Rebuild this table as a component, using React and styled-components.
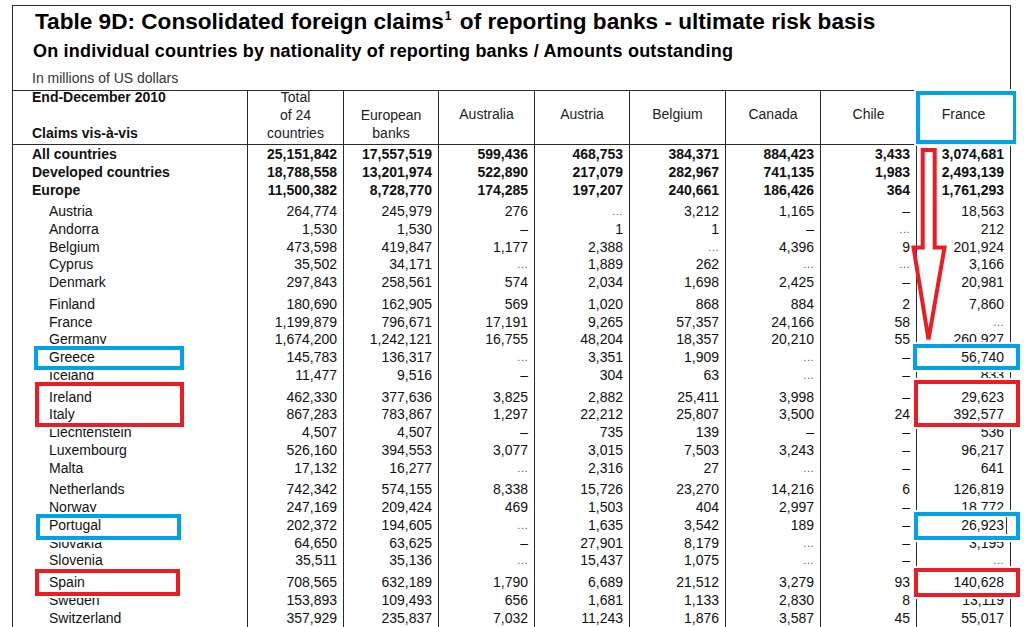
import React from "react";
import styled, { createGlobalStyle } from "styled-components";

const LINE = "#2b2b2b";
const RED = "#ed1c24";
const BLUE = "#00a2e8";
const COLS = "234px 96px 95px 96px 95px 96px 95px 96px 94px";

const GlobalStyle = createGlobalStyle`
  * { box-sizing: border-box; }
  html, body { margin: 0; background: #fff; overflow: hidden; }
  body { font-family: "Liberation Sans", Arial, sans-serif; color: #111; }
`;

const Page = styled.div`
  position: relative;
  width: 1024px;
  height: 627px;
  overflow: hidden;
  padding: 5px 0 0 12px;
`;

const Sheet = styled.div`
  width: 999px;
  height: 660px;
  border: 1px solid ${LINE};
  border-bottom: none;
`;

const TitleBlock = styled.div`
  height: 85px;
  padding: 3px 0 0 19px;
  border-bottom: 1px solid ${LINE};
`;

const Title = styled.h1`
  margin: 0 0 0 3px;
  font-size: 22.6px;
  line-height: 26px;
  font-weight: bold;
  color: #000;
  white-space: nowrap;
`;

const Sup = styled.sup`
  font-size: 12px;
  line-height: 0;
  vertical-align: 9px;
  margin: 0 2px 0 1px;
`;

const Subtitle = styled.h2`
  margin: 5px 0 0 1px;
  font-size: 18px;
  letter-spacing: 0.2px;
  line-height: 22px;
  font-weight: bold;
  color: #000;
  white-space: nowrap;
`;

const Units = styled.div`
  margin-top: 8px;
  font-size: 14px;
  line-height: 16px;
  color: #333;
`;

const HeaderRow = styled.div`
  display: grid;
  grid-template-columns: ${COLS};
  grid-template-rows: 53px;
  height: 54px;
  border-bottom: 1px solid ${LINE};
`;

const HeadCell = styled.div`
  display: flex;
  flex-direction: column;
  justify-content: flex-end;
  align-items: center;
  min-height: 0;
  padding-bottom: ${(p) => (p.$mid ? 21 : 2)}px;
  border-left: 1px solid ${LINE};
  font-size: 14px;
  line-height: 18px;
  color: #222;
  white-space: nowrap;
`;

const StubHead = styled.div`
  display: flex;
  flex-direction: column;
  justify-content: space-between;
  min-height: 0;
  padding: 0 0 2px 19px;
  margin-top: -3px;
  font-size: 14px;
  line-height: 18px;
  font-weight: bold;
  color: #111;
`;

const Row = styled.div`
  display: grid;
  grid-template-columns: ${COLS};
  height: ${(p) => p.$h + p.$gap}px;
  font-weight: ${(p) => (p.$bold ? "bold" : "normal")};
`;

const NameCell = styled.div`
  display: flex;
  align-items: flex-end;
  padding-left: ${(p) => (p.$indent ? 36 : 19)}px;
  font-size: 14px;
  line-height: ${(p) => p.$h}px;
  white-space: nowrap;
`;

const NumCell = styled.div`
  display: flex;
  align-items: flex-end;
  justify-content: flex-end;
  padding-right: 6px;
  border-left: 1px solid ${LINE};
  font-size: 14px;
  line-height: ${(p) => p.$h}px;
  white-space: nowrap;
`;

const Dots = styled.span`
  font-size: 11px;
  font-weight: normal;
  color: #555;
  letter-spacing: 0.5px;
`;

const Mark = styled.div`
  position: absolute;
  left: ${(p) => p.$x}px;
  top: ${(p) => p.$y}px;
  width: ${(p) => p.$w}px;
  height: ${(p) => p.$h}px;
  border: 4px solid ${(p) => (p.$red ? RED : BLUE)};
  box-shadow: 0 0 0 2px #fff;
  pointer-events: none;
`;

const EdgeMask = styled.span`
  position: absolute;
  top: 0;
  bottom: 0;
  left: ${(p) => p.$left}px;
  width: 5px;
  background: #fff;
`;

const Caret = styled.span`
  position: absolute;
  left: ${(p) => p.$left}px;
  top: 1px;
  width: 1px;
  height: 17px;
  background: #333;
`;

const Arrow = styled.svg`
  position: absolute;
  left: 905px;
  top: 145px;
  overflow: visible;
`;

const headers = [
  { lines: ["Total", "of 24", "countries"] },
  { lines: ["European", "banks"] },
  { lines: ["Australia"], mid: true },
  { lines: ["Austria"], mid: true },
  { lines: ["Belgium"], mid: true },
  { lines: ["Canada"], mid: true },
  { lines: ["Chile"], mid: true },
  { lines: ["France"], mid: true },
];

const groups = [
  {
    bold: true,
    h: 18,
    rows: [
      ["All countries", "25,151,842", "17,557,519", "599,436", "468,753", "384,371", "884,423", "3,433", "3,074,681"],
      ["Developed countries", "18,788,558", "13,201,974", "522,890", "217,079", "282,967", "741,135", "1,983", "2,493,139"],
      ["Europe", "11,500,382", "8,728,770", "174,285", "197,207", "240,661", "186,426", "364", "1,761,293"],
    ],
  },
  {
    h: 17.75,
    rows: [
      ["Austria", "264,774", "245,979", "276", "...", "3,212", "1,165", "–", "18,563"],
      ["Andorra", "1,530", "1,530", "–", "1", "1", "–", "...", "212"],
      ["Belgium", "473,598", "419,847", "1,177", "2,388", "...", "4,396", "9", "201,924"],
      ["Cyprus", "35,502", "34,171", "...", "1,889", "262", "...", "...", "3,166"],
      ["Denmark", "297,843", "258,561", "574", "2,034", "1,698", "2,425", "–", "20,981"],
    ],
  },
  {
    h: 17.75,
    rows: [
      ["Finland", "180,690", "162,905", "569", "1,020", "868", "884", "2", "7,860"],
      ["France", "1,199,879", "796,671", "17,191", "9,265", "57,357", "24,166", "58", "..."],
      ["Germany", "1,674,200", "1,242,121", "16,755", "48,204", "18,357", "20,210", "55", "260,927"],
      ["Greece", "145,783", "136,317", "...", "3,351", "1,909", "...", "–", "56,740"],
      ["Iceland", "11,477", "9,516", "–", "304", "63", "...", "–", "833"],
    ],
  },
  {
    h: 17.75,
    rows: [
      ["Ireland", "462,330", "377,636", "3,825", "2,882", "25,411", "3,998", "–", "29,623"],
      ["Italy", "867,283", "783,867", "1,297", "22,212", "25,807", "3,500", "24", "392,577"],
      ["Liechtenstein", "4,507", "4,507", "–", "735", "139", "–", "–", "536"],
      ["Luxembourg", "526,160", "394,553", "3,077", "3,015", "7,503", "3,243", "–", "96,217"],
      ["Malta", "17,132", "16,277", "...", "2,316", "27", "...", "–", "641"],
    ],
  },
  {
    h: 17.75,
    rows: [
      ["Netherlands", "742,342", "574,155", "8,338", "15,726", "23,270", "14,216", "6", "126,819"],
      ["Norway", "247,169", "209,424", "469", "1,503", "404", "2,997", "–", "18,772"],
      ["Portugal", "202,372", "194,605", "...", "1,635", "3,542", "189", "–", "26,923"],
      ["Slovakia", "64,650", "63,625", "–", "27,901", "8,179", "...", "–", "3,195"],
      ["Slovenia", "35,511", "35,136", "...", "15,437", "1,075", "...", "–", "..."],
    ],
  },
  {
    h: 17.75,
    rows: [
      ["Spain", "708,565", "632,189", "1,790", "6,689", "21,512", "3,279", "93", "140,628"],
      ["Sweden", "153,893", "109,493", "656", "1,681", "1,133", "2,830", "8", "13,119"],
      ["Switzerland", "357,929", "235,837", "7,032", "11,243", "1,876", "3,587", "45", "55,017"],
    ],
  },
];

// annotation boxes drawn over the table
const marks = [
  { x: 916, y: 91, w: 100, h: 53, edge: true },
  { x: 913, y: 344, w: 107, h: 26, edge: true },
  { x: 914, y: 380, w: 106, h: 47, red: true, edge: true },
  { x: 914, y: 512, w: 106, h: 28, edge: true, caret: 1006 },
  { x: 914, y: 568, w: 106, h: 29, red: true, edge: true },
  { x: 34, y: 346, w: 150, h: 24 },
  { x: 35, y: 382, w: 149, h: 45, red: true },
  { x: 36, y: 514, w: 145, h: 26 },
  { x: 35, y: 569, w: 145, h: 27, red: true },
];

const renderValue = (v) => (v === "..." ? <Dots>...</Dots> : v);

const App = () => {
  return (
    <Page>
      <GlobalStyle />
      <Sheet>
        <TitleBlock>
          <Title>
            Table 9D: Consolidated foreign claims<Sup>1</Sup> of reporting banks - ultimate risk basis
          </Title>
          <Subtitle>On individual countries by nationality of reporting banks / Amounts outstanding</Subtitle>
          <Units>In millions of US dollars</Units>
        </TitleBlock>

        <HeaderRow>
          <StubHead>
            <span>End-December 2010</span>
            <span>Claims vis-à-vis</span>
          </StubHead>
          {headers.map((col, i) => (
            <HeadCell key={i} $mid={col.mid}>
              {col.lines.map((l) => (
                <span key={l}>{l}</span>
              ))}
            </HeadCell>
          ))}
        </HeaderRow>

        {groups.map((g, gi) =>
          g.rows.map((r, ri) => {
            const gap = gi > 0 && ri === 0 ? 4 : 0;
            return (
              <Row key={r[0]} $h={g.h} $gap={gap} $bold={g.bold}>
                <NameCell $h={g.h} $indent={!g.bold}>
                  {r[0]}
                </NameCell>
                {r.slice(1).map((v, ci) => (
                  <NumCell key={ci} $h={g.h}>
                    {renderValue(v)}
                  </NumCell>
                ))}
              </Row>
            );
          })
        )}
      </Sheet>

      {marks.map((m, i) => (
        <Mark key={i} $x={m.x} $y={m.y} $w={m.w} $h={m.h} $red={m.red}>
          {m.edge && <EdgeMask $left={1008 - m.x - 4} />}
          {m.caret && <Caret $left={m.caret - m.x - 4} />}
        </Mark>
      ))}

      <Arrow width="50" height="205" viewBox="0 0 50 205">
        <polygon
          points="17.7,5 29.7,5 29.7,102.5 39.5,102.5 23.5,194.5 8.5,102.5 17.7,102.5"
          fill="none"
          stroke={RED}
          strokeWidth="4"
          strokeLinejoin="miter"
        />
      </Arrow>
    </Page>
  );
};

export default App;
